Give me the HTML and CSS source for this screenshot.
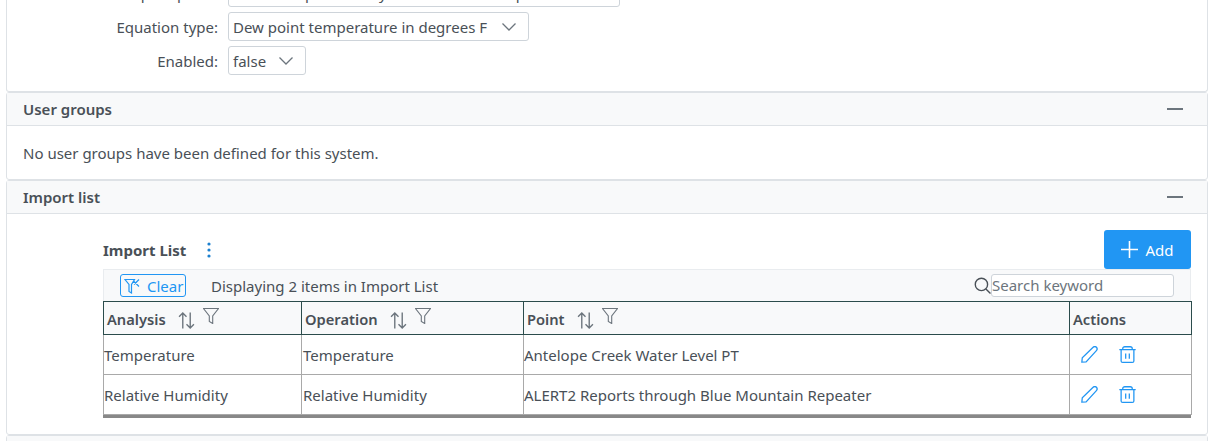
FILE: index.html
```html
<!DOCTYPE html>
<html lang="en">
<head>
<meta charset="utf-8">
<title>System</title>
<link rel="stylesheet" href="styles.css">
</head>
<body>
<div class="page">
  <section class="panel first">
    <div class="form-row">
      <label class="form-label">Compute point:</label>
      <div class="field wide">Creek temperature by Blue Mountain Repeater</div>
    </div>
    <div class="form-row">
      <label class="form-label">Equation type:</label>
      <div class="field select sel-eq"><span>Dew point temperature in degrees F</span><svg class="chev" viewBox="0 0 14 14"><path d="M0.500 3.500l6.500 6.500 6.500-6.500" /></svg></div>
    </div>
    <div class="form-row">
      <label class="form-label">Enabled:</label>
      <div class="field select sel-en"><span>false</span><svg class="chev" viewBox="0 0 14 14"><path d="M0.500 3.500l6.500 6.500 6.500-6.500" /></svg></div>
    </div>
  </section>

  <section class="panel">
    <header class="panel-head"><h2>User groups</h2><span class="dash"></span></header>
    <div class="panel-body">No user groups have been defined for this system.</div>
  </section>

  <section class="panel">
    <header class="panel-head"><h2>Import list</h2><span class="dash"></span></header>
    <div class="import-body">
      <div class="title-row">
        <div class="title-left"><strong>Import List</strong><svg class="dots" viewBox="0 0 4 16"><circle cx="2" cy="2" r="1.600"/><circle cx="2" cy="8" r="1.600"/><circle cx="2" cy="14" r="1.600"/></svg></div>
        <button class="add"><svg class="plus" viewBox="0 0 16 16"><path d="M8 0v16M0 8h16"/></svg>Add</button>
      </div>
      <div class="toolbar">
        <button class="clear"><svg class="fx" viewBox="0 0 16 16"><path d="M1 1.500h9.500L7.500 6.500V15l-2.500-1.500V6.500zM9.500 3L15 8.500M15 1.500l-5 5"/></svg>Clear</button>
        <span class="count">Displaying 2 items in Import List</span>
        <div class="search"><svg class="mag" viewBox="0 0 16 16"><circle cx="7" cy="7" r="5.800"/><path d="M11.200 11.200L15.500 15.500"/></svg><div class="search-box">Search keyword</div></div>
      </div>
      <div class="table-wrap">
      <table>
        <colgroup><col class="c1"><col class="c2"><col class="c3"><col class="c4"></colgroup>
        <thead>
          <tr>
            <th><div class="th-in">Analysis<svg class="sort" viewBox="0 0 16 16"><path d="M4.500 15.500V1M1 4.500L4.500 1 8 4.500M11.500 .5V15M8 11.500l3.500 3.500 3.500-3.500"/></svg><svg class="filt" viewBox="0 0 16 16"><path d="M.5 .5h15L9.700 8v7.500l-3.400-2V8z"/></svg></div></th>
            <th><div class="th-in">Operation<svg class="sort" viewBox="0 0 16 16"><path d="M4.500 15.500V1M1 4.500L4.500 1 8 4.500M11.500 .5V15M8 11.500l3.500 3.500 3.500-3.500"/></svg><svg class="filt" viewBox="0 0 16 16"><path d="M.5 .5h15L9.700 8v7.500l-3.400-2V8z"/></svg></div></th>
            <th><div class="th-in">Point<svg class="sort" viewBox="0 0 16 16"><path d="M4.500 15.500V1M1 4.500L4.500 1 8 4.500M11.500 .5V15M8 11.500l3.500 3.500 3.500-3.500"/></svg><svg class="filt" viewBox="0 0 16 16"><path d="M.5 .5h15L9.700 8v7.500l-3.400-2V8z"/></svg></div></th>
            <th>Actions</th>
          </tr>
        </thead>
        <tbody>
          <tr>
            <td>Temperature</td><td>Temperature</td><td>Antelope Creek Water Level PT</td>
            <td class="acts"><div class="act-row"><svg class="act" viewBox="0 0 16 16"><path d="M.8 15.200l.4-4.200L11.400 1.200c1-.9 2.200-.9 3.100 0 .9 1 .9 2.200 0 3.100L4.800 15z"/></svg><svg class="act" viewBox="0 0 16 16"><path d="M.3 3.500h15.400M3.500 3.500V2.500C3.500 1.400 4.400.7 5.500.7h5c1.100 0 2 .7 2 1.800v1M2 3.500V14c0 .8.600 1.400 1.400 1.400h9.200c.8 0 1.400-.6 1.400-1.400V3.500M6.300 7v5M9.700 7v5"/></svg></div></td>
          </tr>
          <tr>
            <td>Relative Humidity</td><td>Relative Humidity</td><td>ALERT2 Reports through Blue Mountain Repeater</td>
            <td class="acts"><div class="act-row"><svg class="act" viewBox="0 0 16 16"><path d="M.8 15.200l.4-4.200L11.400 1.200c1-.9 2.200-.9 3.100 0 .9 1 .9 2.200 0 3.100L4.800 15z"/></svg><svg class="act" viewBox="0 0 16 16"><path d="M.3 3.500h15.400M3.500 3.500V2.500C3.500 1.400 4.400.7 5.500.7h5c1.100 0 2 .7 2 1.800v1M2 3.500V14c0 .8.600 1.400 1.400 1.400h9.200c.8 0 1.400-.6 1.400-1.400V3.500M6.300 7v5M9.700 7v5"/></svg></div></td>
          </tr>
        </tbody>
      </table>
      </div>
    </div>
  </section>
  <section class="panel"><header class="panel-head"></header></section>
</div>
</body>
</html>
```
FILE: styles.css
```css
* { box-sizing: border-box; }
html, body { margin: 0; height: 441px; overflow: hidden; background: #fff; }
body { font-family: "Noto Sans", "Open Sans", sans-serif; font-size: 15px; color: #495057; }
.page { margin: -22px 7px 0 6px; }
.panel { border: 1px solid #dee2e6; border-radius: 3px; background: #fff; }
.first { height: 114px; border-top: 0; }
.form-row { display: flex; align-items: center; gap: 10px; margin-bottom: 5px; }
.form-label { width: 211px; text-align: right; white-space: nowrap; }
.field { height: 29px; border: 1px solid #ced4da; border-radius: 3px; padding: 0 4px; display: flex; align-items: center; white-space: nowrap; color: #495057; background: #fff; }
.wide { width: 392px; }
.select { justify-content: space-between; padding-right: 12px; }
.sel-eq { width: 301px; }
.sel-en { width: 78px; }
.chev { width: 14px; height: 14px; fill: none; stroke: #6c757d; stroke-width: 1.300; flex: none; }
.panel-head { height: 33px; background: #f8f9fa; border-bottom: 1px solid #dee2e6; display: flex; align-items: center; justify-content: space-between; padding: 0 24px 0 16px; }
.panel-head h2 { margin: 0; font-size: 15px; font-weight: 600; }
.dash { width: 16px; height: 2px; background: #6c757d; }
.panel-body { padding: 17px 16px 0; height: 53px; }
.import-body { padding: 16px 16px 16px 96px; }
.title-row { display: flex; justify-content: space-between; align-items: center; height: 39px; }
.title-left { display: flex; align-items: center; gap: 21px; }
.title-left strong { font-weight: 700; }
.dots { width: 4px; height: 16px; fill: #1c80cf; }
.add { height: 39px; width: 87px; background: #2196f3; color: #fff; border: 0; border-radius: 3px; font: inherit; display: flex; align-items: center; justify-content: center; gap: 7px; }
.plus { width: 17px; height: 17px; fill: none; stroke: #fff; stroke-width: 1.500; }
.toolbar { height: 32px; background: #f8f9fa; border: 1px solid #e9ecef; border-bottom: 0; display: flex; align-items: center; padding-left: 16px; }
.clear { height: 23px; width: 66px; border: 1px solid #2196f3; border-radius: 3px; background: transparent; color: #2196f3; font: inherit; display: flex; align-items: center; gap: 7px; padding: 0 3px; }
.fx { width: 16px; height: 16px; fill: none; stroke: #2196f3; stroke-width: 1.200; flex: none; }
.count { margin-left: 25px; }
.search { margin-left: auto; display: flex; align-items: center; margin-right: 16px; }
.mag { width: 17px; height: 17px; fill: none; stroke: #495057; stroke-width: 1.300; }
.search-box { width: 183px; height: 23px; border: 1px solid #ced4da; border-radius: 3px; background: #fff; color: #6c757d; line-height: 21px; }
.table-wrap { border-bottom: 3px solid #888; }
table { width: 1088px; border-collapse: collapse; table-layout: fixed; }
.c1 { width: 198px; } .c2 { width: 222px; } .c3 { width: 546px; } .c4 { width: 122px; }
th { background: #f8f9fa; border: 1px solid #2b4c4c; height: 33px; text-align: left; padding: 1px 3px 0; font-size: 14.700px; font-weight: 600; white-space: nowrap; }
td { border: 1px solid #a9a9a9; height: 40px; padding: 0; }
td:nth-child(2) { padding-left: 1px; }
.th-in { display: flex; align-items: center; }
.sort { width: 17px; height: 17px; margin: 3px 0 0 12px; fill: none; stroke: #6c757d; stroke-width: 1.300; flex: none; }
.filt { width: 16px; height: 16px; margin: -5px 0 0 8px; fill: none; stroke: #6c757d; stroke-width: 1.100; flex: none; }
td.acts { padding-left: 11px; }
.act-row { display: flex; align-items: center; gap: 21px; }
.act { width: 17px; height: 17px; fill: none; stroke: #2196f3; stroke-width: 1.200; flex: none; }
```
